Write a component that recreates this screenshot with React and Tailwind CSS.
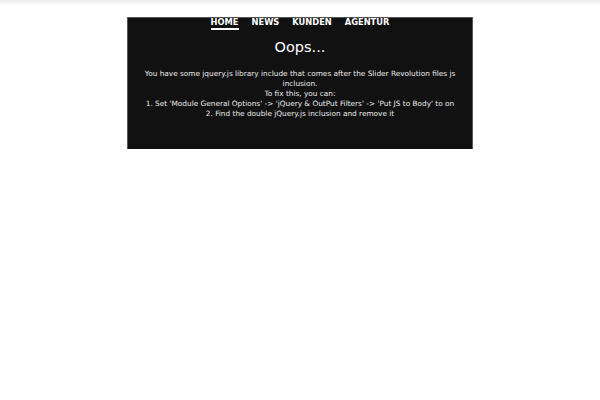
export default function App() {
  const nav = ["HOME", "NEWS", "KUNDEN", "AGENTUR"];
  return (
    <div className="w-[600px] h-[400px] bg-white relative overflow-hidden" style={{ fontFamily: '"DejaVu Sans", sans-serif' }}>
      <div className="h-[6px] bg-gradient-to-b from-[#ececec] to-white" />
      <div className="mx-auto mt-[11px] w-[346px] h-[132px] bg-[#111111] border-t border-x border-[#555] relative">
        <nav className="absolute left-0 right-0 -top-[1px] flex justify-center gap-[13px] text-[8.3px] leading-[10px] font-bold text-white">
          {nav.map((n, i) => (
            <span key={n} className={`pb-[1px] ${i === 0 ? "border-b-2 border-white" : ""}`}>{n}</span>
          ))}
        </nav>
        <div className="pt-[20px] text-center text-white">
          <div className="text-[14.5px] leading-[18px]">Oops...</div>
          <div className="mt-[13px] text-[7.35px] leading-[10px] text-[#ececec] px-[12px]">
            You have some jquery.js library include that comes after the Slider Revolution files js inclusion.
            <br />
            To fix this, you can:
            <br />
            1. Set 'Module General Options' -&gt; 'jQuery &amp; OutPut Filters' -&gt; 'Put JS to Body' to on
            <br />
            2. Find the double jQuery.js inclusion and remove it
          </div>
        </div>
      </div>
    </div>
  );
}
